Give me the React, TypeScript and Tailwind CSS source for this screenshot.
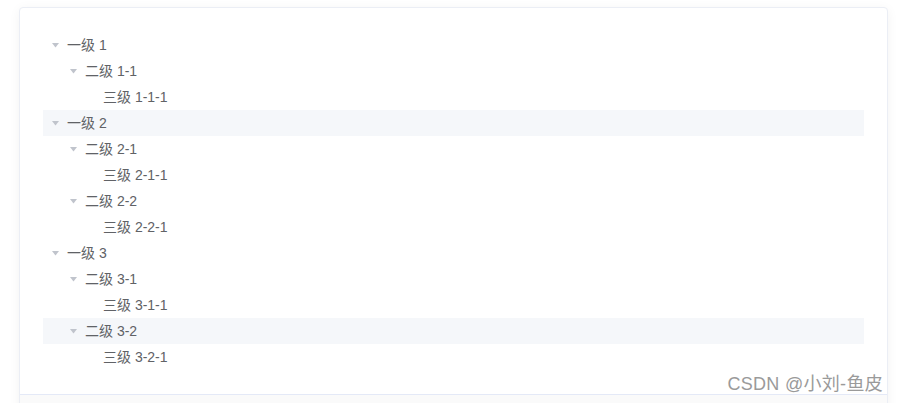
import React from 'react';

type Node = { label: string; children?: Node[]; hover?: boolean };

const data: Node[] = [
  { label: '一级 1', children: [{ label: '二级 1-1', children: [{ label: '三级 1-1-1' }] }] },
  {
    label: '一级 2',
    hover: true,
    children: [
      { label: '二级 2-1', children: [{ label: '三级 2-1-1' }] },
      { label: '二级 2-2', children: [{ label: '三级 2-2-1' }] },
    ],
  },
  {
    label: '一级 3',
    children: [
      { label: '二级 3-1', children: [{ label: '三级 3-1-1' }] },
      { label: '二级 3-2', hover: true, children: [{ label: '三级 3-2-1' }] },
    ],
  },
];

const pad = ['pl-0', 'pl-[18px]', 'pl-[36px]'];

const TreeNode = ({ node, level }: { node: Node; level: number }) => {
  const hasKids = !!node.children?.length;
  return (
    <div>
      <div
        className={`flex items-center h-[26px] cursor-pointer ${pad[level]} ${
          node.hover ? 'bg-[#f5f7fa]' : ''
        }`}
      >
        <span className="w-6 h-6 flex items-center justify-center pt-[1px]">
          {hasKids && (
            <svg width="7" height="5" viewBox="0 0 7 5">
              <path d="M0 0 L7 0 L3.5 4.5 Z" fill="#c0c4cc" />
            </svg>
          )}
        </span>
        <span className="text-[14px] text-[#606266] pt-[1px]">{node.label}</span>
      </div>
      {node.children?.map((c) => (
        <TreeNode key={c.label} node={c} level={level + 1} />
      ))}
    </div>
  );
};

export default function App() {
  return (
    <div
      className="relative w-[898px] h-[403px] bg-white overflow-hidden pt-[7px] pl-[19px]"
      style={{ fontFamily: '"Liberation Sans", "Noto Sans CJK SC", sans-serif' }}
    >
      <div className="w-[869px] h-[420px] border border-[#ebeef5] rounded-[4px] shadow-[0_2px_12px_0_rgba(0,0,0,0.05)] bg-white">
        <div className="pt-[24px] px-[23px] pb-[24px]">
          {data.map((n) => (
            <TreeNode key={n.label} node={n} level={0} />
          ))}
        </div>
        <div className="border-t border-[#e4e9f7] bg-[#fafafa] h-[40px]" />
      </div>

      {/* watermark */}
      <div
        className="absolute right-[15px] top-[371px] text-[18px] text-[#9a9a9a] tracking-[0.3px]"
        style={{ textShadow: '0 0 2px #fff' }}
      >
        CSDN @小刘-鱼皮
      </div>
    </div>
  );
}
